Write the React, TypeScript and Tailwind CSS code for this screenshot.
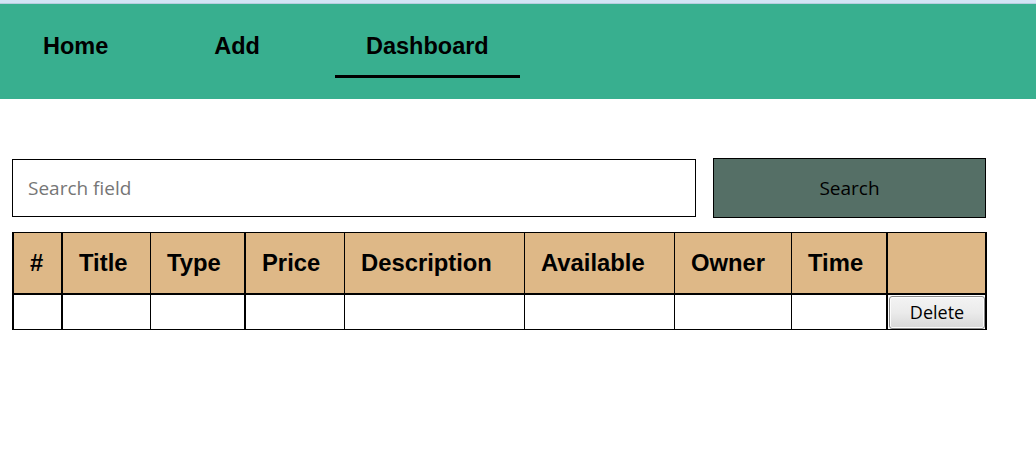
const cols = [
  { label: "#", w: "w-[49px]", b: "border-l-2" },
  { label: "Title", w: "w-[89px]", b: "border-l-2" },
  { label: "Type", w: "w-[94px]", b: "border-l" },
  { label: "Price", w: "w-[100px]", b: "border-l-2" },
  { label: "Description", w: "w-[180px]", b: "border-l" },
  { label: "Available", w: "w-[150px]", b: "border-l" },
  { label: "Owner", w: "w-[117px]", b: "border-l" },
  { label: "Time", w: "w-[95px]", b: "border-l" },
  { label: "", w: "w-[101px]", b: "border-l-2 border-r-2" },
]

function NavItem({ label, active }: { label: string; active?: boolean }) {
  return (
    <a
      href="#"
      className={
        "px-[31px] pt-[28px] pb-[15px] text-[23.5px] leading-[28px] font-bold text-black border-b-[3px] " +
        (active ? "border-black" : "border-transparent")
      }
    >
      {label}
    </a>
  )
}

export default function App() {
  return (
    <div className="min-h-screen w-full bg-white" style={{ fontFamily: '"Liberation Sans", Arial, sans-serif' }}>
      <div className="h-[4px] bg-[#d3e4f5] border-b border-[#b9cde0]" />
      <nav className="flex h-[95px] items-start gap-[44px] bg-[#38af8f] pl-[12px]">
        <NavItem label="Home" />
        <NavItem label="Add" />
        <NavItem label="Dashboard" active />
      </nav>

      <div className="mt-[59px] flex items-center pl-[12px]" style={{ fontFamily: '"Open Sans", "Noto Sans", sans-serif' }}>
        <input
          type="text"
          placeholder="Search field"
          className="h-[58px] w-[684px] border border-black bg-white px-[15px] text-[19px] text-black outline-none placeholder:text-[#767676]"
        />
        <button className="ml-[17px] h-[60px] w-[273px] border border-black bg-[#556f66] text-[19px] text-black">
          Search
        </button>
      </div>

      <div className="ml-[12px] mt-[14px] w-[975px]">
        <div className="flex">
          {cols.map((c, i) => (
            <div
              key={i}
              className={`${c.w} ${c.b} flex h-[61px] items-center border-t border-black bg-[#deb887] pl-[16px] text-[23.8px] font-bold text-black`}
            >
              {c.label}
            </div>
          ))}
        </div>
        <div className="flex">
          {cols.map((c, i) => (
            <div
              key={i}
              className={`${c.w} ${c.b} flex h-[37px] items-center border-t-2 border-b border-black bg-white`}
            >
              {i === cols.length - 1 && (
                <button
                  className="ml-[1px] h-[33px] w-[97px] rounded-[3px] border border-[#8a8a8a] bg-gradient-to-b from-[#f3f3f3] via-[#ebebeb] to-[#d8d8d8] text-[18px] text-black shadow-[inset_0_0_0_1px_#fcfcfc]"
                  style={{ fontFamily: '"Open Sans", "Noto Sans", sans-serif' }}
                >
                  Delete
                </button>
              )}
            </div>
          ))}
        </div>
      </div>
    </div>
  )
}
